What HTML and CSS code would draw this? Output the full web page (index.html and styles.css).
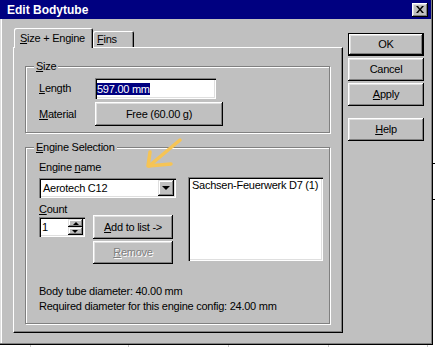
FILE: index.html
```html
<!DOCTYPE html>
<html>
<head>
<meta charset="utf-8">
<link rel="stylesheet" href="styles.css">
</head>
<body>
<div class="window">
  <div class="titlebar">
    <span class="title">Edit Bodytube</span>
    <span class="close"><svg width="8" height="7" viewBox="0 0 8 7"><path d="M0 0h2l2 2.5L6 0h2L5 3.5 8 7H6L4 4.5 2 7H0l3-3.5z" fill="#000"/></svg></span>
  </div>
  <div class="client">
    <div class="tabctl">
      <div class="tabstrip">
        <div class="tab active"><u>S</u>ize + Engine</div>
        <div class="tab"><u>F</u>ins</div>
      </div>
      <div class="panel">
        <div class="group size">
          <span class="group-title"><u>S</u>ize</span>
          <div class="row">
            <span class="rowlabel"><u>L</u>ength</span>
            <div class="textbox"><span class="sel">597.00 mm</span></div>
          </div>
          <div class="row">
            <span class="rowlabel"><u>M</u>aterial</span>
            <div class="btn material">Free (60.00 g)</div>
          </div>
        </div>
        <div class="group engine">
          <span class="group-title"><u>E</u>ngine Selection</span>
          <div class="eng-top">
            <div class="eng-left">
              <div class="lbl">Engine <u>n</u>ame</div>
              <div class="combo">
                <span class="combo-text">Aerotech C12</span>
                <span class="dropbtn"><span class="tri-down"></span></span>
              </div>
              <div class="lbl count-lbl"><u>C</u>ount</div>
              <div class="count-row">
                <div class="spinner">
                  <span class="spin-text">1</span>
                  <div class="spin">
                    <span class="spinbtn"><span class="tri-up small"></span></span>
                    <span class="spinbtn"><span class="tri-down small"></span></span>
                  </div>
                </div>
                <div class="btncol">
                  <div class="btn add"><u>A</u>dd to list -&gt;</div>
                  <div class="btn remove disabled"><u>R</u>emove</div>
                </div>
              </div>
            </div>
            <div class="listbox"><div class="item">Sachsen-Feuerwerk D7 (1)</div></div>
          </div>
          <div class="info first">Body tube diameter: 40.00 mm</div>
          <div class="info">Required diameter for this engine config: 24.00 mm</div>
        </div>
      </div>
    </div>
    <div class="buttons">
      <div class="btn dlg default">OK</div>
      <div class="btn dlg">Cancel</div>
      <div class="btn dlg"><u>A</u>pply</div>
      <div class="btn dlg help"><u>H</u>elp</div>
    </div>
  </div>
  <svg class="arrow" width="60" height="50" viewBox="140 132 60 50">
    <g fill="none" stroke="#f6c455" stroke-width="3.5" stroke-linecap="round" stroke-linejoin="round">
      <path d="M180 140 L149 166"/>
      <path d="M150 152 L148 166 L171 164"/>
    </g>
  </svg>
</div>
</body>
</html>
```
FILE: styles.css
```css
html, body {
  margin: 0;
  padding: 0;
}
body {
  background-color: #fff;
  background-image:
    linear-gradient(#000, #000),
    linear-gradient(#000, #000),
    linear-gradient(#c8c8c8, #c8c8c8),
    linear-gradient(#c8c8c8, #c8c8c8),
    linear-gradient(#c8c8c8, #c8c8c8),
    linear-gradient(#c8c8c8, #c8c8c8),
    linear-gradient(#c8c8c8, #c8c8c8);
  background-size: 2px 1px, 2px 1px, 1px 2px, 1px 2px, 1px 2px, 1px 2px, 1px 2px;
  background-position: 433px 163px, 433px 199px, 30px 345px, 128px 345px, 228px 345px, 328px 345px, 427px 345px;
  background-repeat: no-repeat;
  height: 347px;
  font-family: "Liberation Sans", Arial, sans-serif;
  font-size: 11px;
  letter-spacing: -0.25px;
  color: #000;
  line-height: 13px;
}
u {
  text-decoration: underline;
  text-underline-offset: 1px;
}
.window {
  position: relative;
  width: 433px;
  height: 345px;
  box-sizing: border-box;
  background: #c0c0c0;
  box-shadow: inset -1px -1px #000, inset -2px -2px #808080, inset 1px 1px #dfdfdf, inset 2px 2px #fff;
}
.titlebar {
  height: 19px;
  margin-right: 2px;
  box-sizing: border-box;
  background: #000080;
  color: #fff;
  display: flex;
  align-items: center;
  justify-content: space-between;
  padding: 0 3px 0 7px;
}
.title {
  font-weight: bold;
  font-size: 12px;
  letter-spacing: 0;
  padding-top: 2px;
}
.close {
  width: 16px;
  height: 14px;
  background: #c0c0c0;
  box-shadow: inset -1px -1px #000, inset 1px 1px #fff, inset -2px -2px #808080, inset 2px 2px #dfdfdf;
  display: flex;
  align-items: center;
  justify-content: center;
}
.close svg { display: block; margin-left: -1px; }

.client {
  display: flex;
  padding: 9px 0 0 13px;
}
.tabctl {
  width: 330px;
}
.tabstrip {
  height: 19px;
  display: flex;
  align-items: flex-end;
  padding-left: 1px;
  position: relative;
  z-index: 1;
}
.tab {
  box-sizing: border-box;
  height: 16px;
  background: #c0c0c0;
  box-shadow: inset 1px 1px #fff, inset -1px 0 #000, inset -2px 0 #808080;
  border-radius: 2px 2px 0 0;
  padding: 1px 6px 0 4px;
  display: flex;
  align-items: center;
}
.tab.active {
  width: 79px;
  height: 20px;
  margin-bottom: -1px;
  padding: 0 0 0 6px;
}
.tab + .tab {
  width: 41px;
}
.panel {
  height: 286px;
  box-sizing: border-box;
  border-top: 1px solid #fff;
  border-left: 1px solid #fff;
  border-right: 1px solid #000;
  border-bottom: 1px solid #000;
  box-shadow: inset -1px -1px #808080;
  padding: 18px 0 0 11px;
}
.group {
  position: relative;
  width: 305px;
  box-sizing: border-box;
  border: 1px solid #808080;
  box-shadow: 1px 1px #fff, inset 1px 1px #fff;
  padding-left: 13px;
}
.group-title {
  position: absolute;
  top: -7px;
  left: 8px;
  padding: 0 2px;
  background: #c0c0c0;
  line-height: 13px;
}
.group.size {
  height: 67px;
  padding-top: 11px;
}
.row {
  display: flex;
  align-items: center;
}
.row + .row {
  margin-top: 3px;
}
.rowlabel {
  width: 56px;
}
.textbox {
  width: 121px;
  height: 21px;
  box-sizing: border-box;
  background: #fff;
  box-shadow: inset 1px 1px #808080, inset 2px 2px #000, inset -1px -1px #fff, inset -2px -2px #dfdfdf;
  padding-left: 2px;
  display: flex;
  align-items: center;
}
.sel {
  background: #000080;
  color: #fff;
  line-height: 12px;
}
.btn {
  box-sizing: border-box;
  background: #c0c0c0;
  box-shadow: inset -1px -1px #000, inset 1px 1px #fff, inset -2px -2px #808080, inset 2px 2px #dfdfdf;
  display: flex;
  align-items: center;
  justify-content: center;
}
.material {
  width: 128px;
  height: 24px;
}
.group.engine {
  height: 177px;
  margin-top: 14px;
  padding-top: 13px;
}
.eng-top {
  display: flex;
  align-items: flex-start;
}
.eng-left {
  width: 137px;
  margin-right: 12px;
}
.combo {
  margin-top: 4px;
  height: 20px;
  box-sizing: border-box;
  background: #fff;
  box-shadow: inset 1px 1px #808080, inset 2px 2px #000, inset -1px -1px #fff, inset -2px -2px #dfdfdf;
  padding: 2px 2px 2px 4px;
  display: flex;
  align-items: center;
  justify-content: space-between;
}
.dropbtn {
  width: 16px;
  height: 16px;
  box-sizing: border-box;
  background: #c0c0c0;
  box-shadow: inset -1px -1px #000, inset 1px 1px #dfdfdf, inset -2px -2px #808080, inset 2px 2px #fff;
  display: flex;
  align-items: center;
  justify-content: center;
}
.tri-down {
  width: 0;
  height: 0;
  border-left: 4px solid transparent;
  border-right: 4px solid transparent;
  border-top: 4px solid #000;
  margin-left: -1px;
}
.tri-up {
  width: 0;
  height: 0;
  border-left: 4px solid transparent;
  border-right: 4px solid transparent;
  border-bottom: 4px solid #000;
}
.tri-up.small, .tri-down.small {
  border-left-width: 3px;
  border-right-width: 3px;
}
.tri-up.small { border-bottom-width: 3px; }
.tri-down.small { border-top-width: 3px; }
.count-lbl {
  margin-top: 5px;
  margin-bottom: -1px;
}
.count-row {
  display: flex;
  align-items: flex-start;
}
.spinner {
  margin-top: 2px;
  width: 46px;
  height: 20px;
  box-sizing: border-box;
  background: #fff;
  box-shadow: inset 1px 1px #808080, inset 2px 2px #000, inset -1px -1px #fff, inset -2px -2px #dfdfdf;
  padding: 2px 2px 2px 3px;
  display: flex;
  justify-content: space-between;
  align-items: stretch;
}
.spin-text {
  line-height: 16px;
}
.spin {
  width: 15px;
  display: flex;
  flex-direction: column;
}
.spinbtn {
  height: 8px;
  box-sizing: border-box;
  background: #c0c0c0;
  box-shadow: inset -1px -1px #000, inset 1px 1px #dfdfdf, inset -2px -2px #808080, inset 2px 2px #fff;
  display: flex;
  align-items: center;
  justify-content: center;
}
.btncol {
  margin-left: 8px;
  width: 80px;
  display: flex;
  flex-direction: column;
}
.add {
  height: 24px;
}
.remove {
  height: 23px;
  margin-top: 2px;
}
.disabled {
  color: #808080;
  text-shadow: 1px 1px 0 #fff;
}
.listbox {
  margin-top: 16px;
  width: 135px;
  height: 84px;
  box-sizing: border-box;
  background: #fff;
  box-shadow: inset 1px 1px #808080, inset 2px 2px #000, inset -1px -1px #fff, inset -2px -2px #dfdfdf;
  padding: 2px 2px 2px 4px;
}
.info.first {
  margin-top: 21px;
}
.info + .info {
  margin-top: 2px;
}
.buttons {
  margin-left: 5px;
  padding-top: 5px;
  width: 76px;
  display: flex;
  flex-direction: column;
}
.dlg {
  height: 23px;
}
.dlg + .dlg {
  margin-top: 2px;
}
.dlg.help {
  margin-top: 12px;
}
.dlg.default {
  box-shadow: inset 0 0 0 1px #000, inset -2px -2px #000, inset 2px 2px #fff, inset -3px -3px #808080, inset 3px 3px #dfdfdf;
}
.arrow {
  position: absolute;
  left: 140px;
  top: 132px;
  overflow: visible;
}
```
